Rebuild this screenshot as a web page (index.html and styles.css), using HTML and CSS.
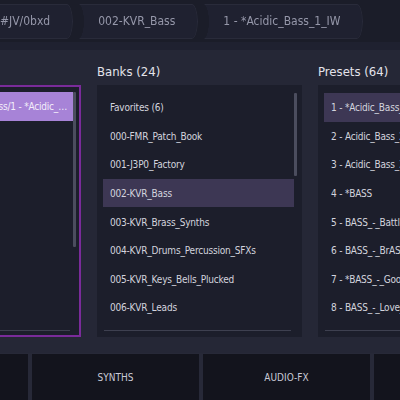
FILE: index.html
```html
<!DOCTYPE html>
<html>
<head>
<meta charset="utf-8">
<link rel="stylesheet" href="styles.css">
</head>
<body>
<div class="app">
  <header class="topbar">
    <nav class="crumbs">
      <div class="crumb">#JV/0bxd</div>
      <div class="crumb">002-KVR_Bass</div>
      <div class="crumb">1 - *Acidic_Bass_1_IW</div>
    </nav>
  </header>
  <main class="browser">
    <div class="columns">
      <section class="col">
        <h2 class="col-title">&nbsp;</h2>
        <div class="box box-active">
          <div class="box-body">
            <ul class="list">
              <li class="row row-picked">Favorites/002-KVR_Bass/1 - *Acidic_Bass_1_IW</li>
            </ul>
            <div class="vscroll"><div class="thumb thumb-long"></div></div>
          </div>
          <div class="hscroll"></div>
        </div>
      </section>
      <section class="col">
        <h2 class="col-title">Banks (24)</h2>
        <div class="box">
          <div class="box-body">
            <ul class="list">
              <li class="row">Favorites (6)</li>
              <li class="row">000-FMR_Patch_Book</li>
              <li class="row">001-J3P0_Factory</li>
              <li class="row row-sel">002-KVR_Bass</li>
              <li class="row">003-KVR_Brass_Synths</li>
              <li class="row">004-KVR_Drums_Percussion_SFXs</li>
              <li class="row">005-KVR_Keys_Bells_Plucked</li>
              <li class="row">006-KVR_Leads</li>
            </ul>
            <div class="vscroll"><div class="thumb thumb-short"></div></div>
          </div>
          <div class="hscroll"></div>
        </div>
      </section>
      <section class="col">
        <h2 class="col-title">Presets (64)</h2>
        <div class="box">
          <div class="box-body">
            <ul class="list">
              <li class="row row-sel">1 - *Acidic_Bass_1_IW</li>
              <li class="row">2 - Acidic_Bass_2_IW</li>
              <li class="row">3 - Acidic_Bass_3_IW</li>
              <li class="row">4 - *BASS</li>
              <li class="row">5 - BASS_-_Battle</li>
              <li class="row">6 - BASS_-_BrASSy</li>
              <li class="row">7 - *BASS_-_Good_Vibes</li>
              <li class="row">8 - BASS_-_Love_Me</li>
            </ul>
            <div class="vscroll"><div class="thumb thumb-short"></div></div>
          </div>
          <div class="hscroll"></div>
        </div>
      </section>
    </div>
  </main>
  <footer class="tabs">
    <div class="tab">INSTRUMENTS</div>
    <div class="tab">SYNTHS</div>
    <div class="tab">AUDIO-FX</div>
    <div class="tab">MIDI-FX</div>
  </footer>
</div>
</body>
</html>
```
FILE: styles.css
```css
* { box-sizing: border-box; }

body {
  margin: 0;
  width: 400px;
  height: 400px;
  overflow: hidden;
  background: #252736;
  font-family: "DejaVu Sans Condensed", "DejaVu Sans", sans-serif;
  font-stretch: condensed;
  color: #d3d4de;
}

.app {
  display: flex;
  flex-direction: column;
  height: 400px;
}

/* ---------- breadcrumb bar ---------- */
.topbar {
  flex: none;
  height: 50px;
  background: #1b1d29;
  border-bottom: 8px solid #1f2130;
  padding-top: 4px;
}

.crumbs {
  display: flex;
  gap: 5px;
  height: 35px;
  margin-left: -20px;
}

.crumb {
  display: flex;
  align-items: center;
  padding: 0 22px 1px 19px;
  background: #1f2130;
  border: 1px solid #292b3a;
  border-radius: 0 6px 6px 0 / 0 50% 50% 0;
  -webkit-mask-image: radial-gradient(ellipse 6px 18px at 0 50%, transparent 96%, #000 100%);
  mask-image: radial-gradient(ellipse 6px 18px at 0 50%, transparent 96%, #000 100%);
  font-size: 12px;
  color: #9597a9;
  white-space: nowrap;
}

/* ---------- browser columns ---------- */
.browser {
  flex: 1;
  min-height: 0;
  padding: 12px 0 16px;
  overflow: hidden;
}

.columns {
  display: flex;
  gap: 16px;
  margin-left: -124px;
}

.col {
  flex: none;
  width: 205px;
}

.col-title {
  margin: 0 0 3px;
  height: 20px;
  line-height: 20px;
  font-size: 13px;
  font-weight: normal;
  color: #e3e3eb;
  white-space: nowrap;
}

.box {
  height: 252px;
  background: #1c1e2b;
  display: flex;
  flex-direction: column;
  padding: 8px 5px 6px 6px;
}

.box-active {
  border: 2px solid #7a2b9a;
  padding: 5px 3px 4px 4px;
}

.box-body {
  flex: 1;
  min-height: 0;
  display: flex;
  overflow: hidden;
}

.list {
  flex: 1;
  min-width: 0;
  list-style: none;
  margin: 0;
  padding: 0;
}

.row {
  height: 28.6px;
  display: flex;
  align-items: center;
  padding: 1px 6px 0 7px;
  font-size: 10px;
  letter-spacing: -0.2px;
  white-space: nowrap;
  overflow: hidden;
}

.row-sel {
  background: #3d3754;
}

.row-picked {
  display: block;
  line-height: 27.6px;
  padding: 1px 3px 0 22px;
  background: #a783d7;
  color: #f3eefa;
  text-overflow: ellipsis;
}

.vscroll {
  flex: none;
  width: 3px;
}

.thumb {
  width: 3px;
  background: #4b4d5e;
  border-radius: 1px;
}

.thumb-short { height: 83px; }
.thumb-long { height: 155px; }

.hscroll {
  flex: none;
  height: 1px;
  margin: 0 6px 0 1px;
  background: #3e4050;
}

/* ---------- bottom tabs ---------- */
.tabs {
  flex: none;
  height: 47px;
  display: flex;
  gap: 4px;
  padding-top: 1px;
  background: #272938;
  margin-left: -139px;
}

.tab {
  flex: none;
  width: 167px;
  display: flex;
  align-items: center;
  justify-content: center;
  background: #13141d;
  font-size: 10px;
  color: #c9cad6;
}
```
